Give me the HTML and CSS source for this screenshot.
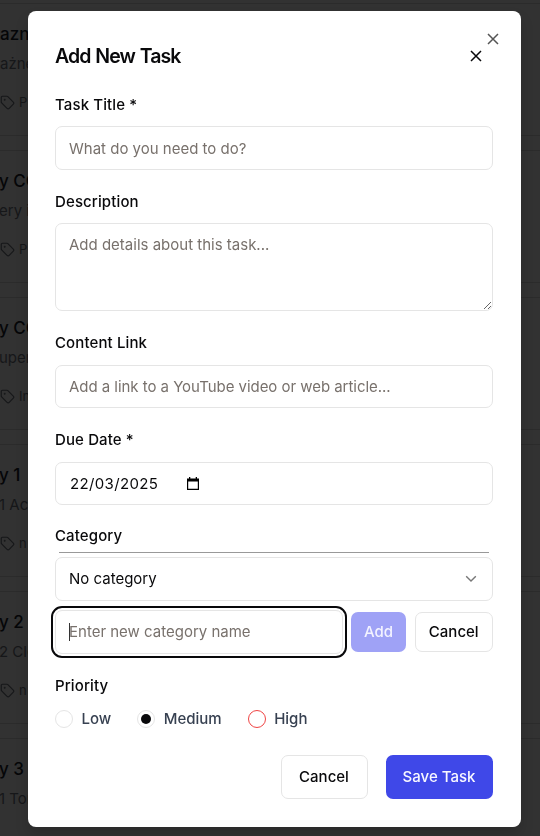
FILE: index.html
```html
<!DOCTYPE html>
<html lang="en">
<head>
<meta charset="utf-8">
<title>Add New Task</title>
<link rel="stylesheet" href="styles.css">
</head>
<body>
<svg class="defs" aria-hidden="true">
  <symbol id="tag" viewBox="0 0 24 24"><path d="M12.59 2.59A2 2 0 0 0 11.17 2H4a2 2 0 0 0-2 2v7.17a2 2 0 0 0 .59 1.42l8.7 8.7a2.43 2.43 0 0 0 3.42 0l6.58-6.58a2.43 2.43 0 0 0 0-3.42z"/><circle cx="7.5" cy="7.5" r=".6" fill="currentColor"/></symbol>
  <symbol id="close" viewBox="0 0 12 12"><path d="M1 1l10 10M11 1l-10 10"/></symbol>
</svg>
<main class="tasks">
  <article class="task"><h3>azn</h3><p>ażne</p><div class="meta"><svg><use href="#tag"/></svg>P</div></article>
  <article class="task"><h3>y CC</h3><p>ery in</p><div class="meta"><svg><use href="#tag"/></svg>P</div></article>
  <article class="task"><h3>y CC</h3><p>uper</p><div class="meta"><svg><use href="#tag"/></svg>In</div></article>
  <article class="task"><h3>y 1</h3><p>1 Act</p><div class="meta"><svg><use href="#tag"/></svg>n</div></article>
  <article class="task"><h3>y 2</h3><p>2 Clo</p><div class="meta"><svg><use href="#tag"/></svg>n</div></article>
  <article class="task last"><h3>y 3</h3><p>1 Tor</p></article>
</main>
<form class="dialog">
  <button class="dismiss" type="button" aria-label="Dismiss"><svg><use href="#close"/></svg></button>
  <header class="head">
    <h2>Add New Task</h2>
    <button class="close" type="button" aria-label="Close"><svg><use href="#close"/></svg></button>
  </header>
  <section class="field">
    <label for="title">Task Title *</label>
    <input id="title" class="control" placeholder="What do you need to do?">
  </section>
  <section class="field">
    <label for="desc">Description</label>
    <textarea id="desc" class="control area" placeholder="Add details about this task..."></textarea>
  </section>
  <section class="field">
    <label for="link">Content Link</label>
    <input id="link" class="control link" placeholder="Add a link to a YouTube video or web article...">
  </section>
  <section class="field">
    <label>Due Date *</label>
    <div class="control date"><span>22/03/2025</span><svg viewBox="0 0 12 14"><path d="M0 1.5h2V0h1.3v1.5h5.4V0H10v1.5h2V13H0zM1.2 4.5v7.3h9.6V4.5z" fill-rule="evenodd"/></svg></div>
  </section>
  <section class="field category">
    <label>Category</label>
    <hr>
    <div class="control select"><span>No category</span><svg viewBox="0 0 12 8"><path d="M1.2 1.3L6 6.1l4.8-4.8"/></svg></div>
    <div class="new-category">
      <div class="control focused"><i class="caret"></i><span>Enter new category name</span></div>
      <button class="btn add" type="button">Add</button>
      <button class="btn small" type="button">Cancel</button>
    </div>
  </section>
  <section class="field priority">
    <label>Priority</label>
    <div class="radios">
      <span class="option"><i class="radio"></i>Low</span>
      <span class="option"><i class="radio checked"></i>Medium</span>
      <span class="option"><i class="radio high"></i>High</span>
    </div>
  </section>
  <footer class="actions">
    <button class="btn cancel" type="button">Cancel</button>
    <button class="btn save" type="button">Save Task</button>
  </footer>
</form>
</body>
</html>
```
FILE: styles.css
```css
* { box-sizing: border-box; }
body { margin: 0; height: 836px; overflow: hidden; background: #323232; color: #09090b; font: 15px/22px Inter, "Noto Sans", sans-serif; }
h2, h3, p { margin: 0; }
button { font: inherit; color: inherit; padding: 0; background: none; border: 0; }
svg { display: block; fill: none; stroke: currentColor; }
.defs { display: none; }

.tasks { display: flex; flex-direction: column; gap: 14px; padding-top: 3px; margin: 0 -2px; }
.task { height: 133px; flex: none; padding: 18px 1px 0; border: 1px solid #2b2b2b; white-space: nowrap; color: #161719; }
.task h3 { margin-left: -1px; font-size: 17px; font-weight: 500; line-height: 24px; color: #050608; }
.task p { margin-left: -1px; font-size: 15px; line-height: 22px; margin-top: 7px; }
.task .meta { display: flex; align-items: center; gap: 4px; margin-top: 18px; font-size: 13px; line-height: 18px; }
.meta svg { width: 15px; height: 15px; stroke-width: 1.8; }
.task:first-child h3, .task:first-child p { margin-left: 0; }

.dialog { position: fixed; left: 28px; top: 11px; width: 492.5px; height: 815.5px; padding: 32px 28px 0 27px; background: #fff; border-radius: 8px; box-shadow: 0 8px 14px rgba(0, 0, 0, .14); }
.dismiss { position: absolute; right: 21.5px; top: 22px; color: #555; }
.dismiss svg, .close svg { width: 12px; height: 12px; stroke-width: 1.5; }
.head { display: flex; align-items: center; justify-content: space-between; height: 25px; margin-bottom: 25.5px; padding-right: 11px; }
.head h2 { font-size: 19.5px; font-weight: 600; letter-spacing: -.96px; word-spacing: 1px; }

.field { margin-bottom: 21px; }
.field label { display: block; height: 22px; margin-bottom: 10.5px; font-weight: 500; letter-spacing: .12px; }
.control { display: flex; align-items: center; width: 100%; height: 43.5px; padding: 1px 13px 0; border: 1px solid #e5e5e5; border-radius: 7px; background: #fff; font: inherit; color: #09090b; }
.control::placeholder { color: #78716c; opacity: 1; }
.area { display: block; height: 88px; padding: 10px 13px; resize: vertical; }
.link { letter-spacing: -.04px; }
.date { gap: 29px; height: 43px; padding-left: 14px; letter-spacing: .35px; }
.date svg { width: 12px; height: 14px; fill: #000; stroke: none; }
.category { margin-top: -.5px; }
.category label { margin-bottom: 5px; }
.category hr { height: 1px; margin: 0 4px 4px; border: 0; background: #999; }
.select { justify-content: space-between; padding-right: 15px; }
.select svg { width: 12px; height: 8px; stroke: #777; stroke-width: 1.4; }
.new-category { display: flex; align-items: center; margin-top: 9.5px; }
.focused { width: 288px; margin-right: 8px; color: #78716c; outline: 2px solid #09090b; outline-offset: 2px; }
.caret { width: 1px; height: 18px; margin-right: -1px; background: #333; }

.btn { display: flex; align-items: center; justify-content: center; height: 40px; border-radius: 7px; font-weight: 500; }
.add { width: 55px; margin-right: 9px; background: #9fa2f6; color: #f3f3ff; }
.small { width: 77.5px; border: 1px solid #e5e5e5; }
.priority label { margin-bottom: 11px; }
.radios { display: flex; gap: 26px; color: #374151; font-weight: 500; }
.option { display: flex; align-items: center; gap: 8.5px; }
.radio { display: grid; place-items: center; width: 18px; height: 18px; border: 1px solid #e5e5e5; border-radius: 50%; }
.checked::after { content: ""; width: 10px; height: 10px; border-radius: 50%; background: #09090b; }
.high { border-color: #ef4444; }
.actions { display: flex; justify-content: flex-end; gap: 18px; margin-top: 25px; }
.actions .btn { height: 44px; }
.cancel { width: 87px; border: 1px solid #e5e5e5; }
.save { width: 107px; background: #3f48e8; color: #f8f8ff; }
```
